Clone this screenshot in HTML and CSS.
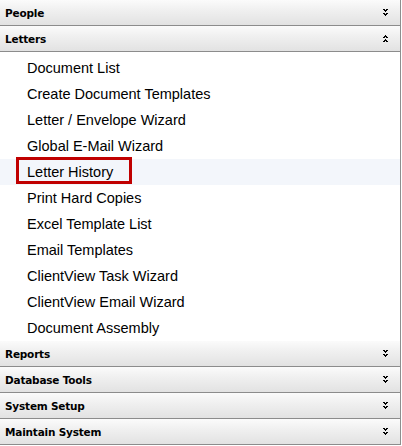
FILE: index.html
```html
<!DOCTYPE html>
<html>
<head>
<meta charset="utf-8">
<link rel="stylesheet" href="styles.css">
</head>
<body>
<div class="panel">
  <div class="hdr"><span class="title">People</span>
    <svg class="chev" width="5" height="7" viewBox="0 0 5 7"><path d="M0 0h2v1H0zM3 0h2v1H3zM1 1h3v1H1zM2 2h1v1H2zM0 4h2v1H0zM3 4h2v1H3zM1 5h3v1H1zM2 6h1v1H2z" fill="#000"/></svg>
  </div>
  <div class="hdr"><span class="title">Letters</span>
    <svg class="chev" width="5" height="7" viewBox="0 0 5 7"><path d="M2 0h1v1H2zM1 1h3v1H1zM0 2h2v1H0zM3 2h2v1H3zM2 4h1v1H2zM1 5h3v1H1zM0 6h2v1H0zM3 6h2v1H3z" fill="#000"/></svg>
  </div>
  <ul class="items">
    <li>Document List</li>
    <li>Create Document Templates</li>
    <li>Letter / Envelope Wizard</li>
    <li>Global E-Mail Wizard</li>
    <li class="sel">Letter History<span class="mark"></span></li>
    <li>Print Hard Copies</li>
    <li>Excel Template List</li>
    <li>Email Templates</li>
    <li>ClientView Task Wizard</li>
    <li>ClientView Email Wizard</li>
    <li>Document Assembly</li>
  </ul>
  <div class="hdr"><span class="title">Reports</span>
    <svg class="chev" width="5" height="7" viewBox="0 0 5 7"><path d="M0 0h2v1H0zM3 0h2v1H3zM1 1h3v1H1zM2 2h1v1H2zM0 4h2v1H0zM3 4h2v1H3zM1 5h3v1H1zM2 6h1v1H2z" fill="#000"/></svg>
  </div>
  <div class="hdr"><span class="title">Database Tools</span>
    <svg class="chev" width="5" height="7" viewBox="0 0 5 7"><path d="M0 0h2v1H0zM3 0h2v1H3zM1 1h3v1H1zM2 2h1v1H2zM0 4h2v1H0zM3 4h2v1H3zM1 5h3v1H1zM2 6h1v1H2z" fill="#000"/></svg>
  </div>
  <div class="hdr"><span class="title">System Setup</span>
    <svg class="chev" width="5" height="7" viewBox="0 0 5 7"><path d="M0 0h2v1H0zM3 0h2v1H3zM1 1h3v1H1zM2 2h1v1H2zM0 4h2v1H0zM3 4h2v1H3zM1 5h3v1H1zM2 6h1v1H2z" fill="#000"/></svg>
  </div>
  <div class="hdr"><span class="title">Maintain System</span>
    <svg class="chev" width="5" height="7" viewBox="0 0 5 7"><path d="M0 0h2v1H0zM3 0h2v1H3zM1 1h3v1H1zM2 2h1v1H2zM0 4h2v1H0zM3 4h2v1H3zM1 5h3v1H1zM2 6h1v1H2z" fill="#000"/></svg>
  </div>
</div>
</body>
</html>
```
FILE: styles.css
```css
html, body {
  margin: 0;
  padding: 0;
  background: #fff;
}
.panel {
  width: 400px;
  border-right: 1px solid #8e8e8e;
  background: #fff;
}
.hdr {
  height: 25px;
  border-bottom: 1px solid #8c8c8c;
  background: linear-gradient(#fbfbfb, #f0f0f0 40%, #e2e2e2);
  display: flex;
  align-items: center;
  justify-content: space-between;
  padding: 0 12px 0 5px;
}
.title {
  font-family: "DejaVu Sans", sans-serif;
  font-weight: bold;
  font-size: 10.5px;
  letter-spacing: -0.2px;
  color: #000;
  padding-top: 1px;
}
.chev {
  display: block;
  margin-top: 0;
}
.items {
  list-style: none;
  margin: 0;
  padding: 3px 0 0 0;
}
.items li {
  height: 26px;
  line-height: 26px;
  padding-left: 27px;
  font-family: "Liberation Sans", Arial, sans-serif;
  font-size: 14.5px;
  color: #000;
  position: relative;
}
.items li.sel {
  background: #f3f6fb;
}
.mark {
  position: absolute;
  left: 16px;
  top: -2px;
  width: 110px;
  height: 21px;
  border: 3px solid #c00000;
}
```
